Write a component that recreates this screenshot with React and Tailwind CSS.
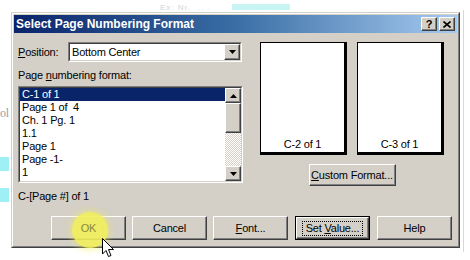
import React from 'react';

const raised =
  'border border-t-white border-l-white border-r-[#404040] border-b-[#404040] shadow-[inset_-1px_-1px_0_#808080]';

const Btn = ({ children, className = '', focus = false }) => (
  <div className={`h-[24px] w-[75px] ${focus ? 'border border-black' : ''} ${className}`}>
    <div className={`h-full w-full ${raised} flex items-center justify-center bg-[#d4d0c8]`}>
      {focus ? (
        <span className="border border-dotted border-black px-[3px] leading-[13px]">{children}</span>
      ) : (
        children
      )}
    </div>
  </div>
);

const Arrow = ({ up }) => (
  <svg width="7" height="4" viewBox="0 0 7 4">
    <path d={up ? 'M3.5 0 L7 4 L0 4 Z' : 'M0 0 L7 0 L3.5 4 Z'} fill="#000" />
  </svg>
);

const Page = ({ label }) => (
  <div className="w-[87px] h-[113px] pr-[2px] pb-[2px] bg-black">
    <div className="h-full w-full bg-white border border-black flex items-end justify-center pb-[1px]">
      <span className="leading-[13px]">{label}</span>
    </div>
  </div>
);

const items = ['C-1 of 1', 'Page 1 of  4', 'Ch. 1 Pg. 1', '1.1', 'Page 1', 'Page -1-', '1'];

export default function App() {
  return (
    <div
      className="relative w-[470px] h-[260px] bg-white overflow-hidden text-[11px] text-black tracking-[-0.2px]"
      style={{ fontFamily: '"Liberation Sans", Arial, sans-serif' }}
    >
      {/* background page content behind the dialog */}
      <div className="absolute left-[160px] top-[2px] text-[8px] text-[#d0d4dc] tracking-[1px]">Ex:&nbsp;Nr. &nbsp;..&nbsp;.</div>
      <div className="absolute left-[232px] top-[4px] w-[58px] h-[6px] bg-[#c8f4f4]" />
      <div className="absolute left-0 top-[104px] text-[12px] text-[#9aa0a8]" style={{ fontFamily: '"Liberation Serif", serif' }}>ol</div>
      <div className="absolute left-0 top-[157px] w-[9px] h-[14px] bg-[#9ef0f4]" />
      <div className="absolute left-0 top-[188px] w-[9px] h-[14px] bg-[#9ef0f4]" />
      <div className="absolute left-[463px] top-[10px] w-px h-[242px] bg-[#d8d8d8]" />

      {/* dialog */}
      <div className="ml-[11px] mt-[12px] w-[449px] h-[236px] border border-t-[#d4d0c8] border-l-[#d4d0c8] border-r-[#404040] border-b-[#404040]">
        <div className="h-full w-full border border-t-white border-l-white border-r-[#808080] border-b-[#808080] bg-[#d4d0c8] p-px flex flex-col">
          <div className="h-[18px] flex items-center justify-between pl-[2px] pr-[2px] bg-[linear-gradient(to_right,#0a246a,#3a6ea5_50%,#a6caf0)]">
            <span className="text-white font-bold text-[12px] tracking-normal">Select Page Numbering Format</span>
            <div className="flex">
              <div className={`w-[16px] h-[14px] ${raised} bg-[#d4d0c8] flex items-center justify-center font-bold text-[11px] leading-none`}>?</div>
              <div className={`ml-[2px] w-[16px] h-[14px] ${raised} bg-[#d4d0c8] flex items-center justify-center`}>
                <svg width="8" height="7" viewBox="0 0 8 7">
                  <path d="M0.5 0.5 L7.5 6.5 M7.5 0.5 L0.5 6.5" stroke="#000" strokeWidth="1.6" />
                </svg>
              </div>
            </div>
          </div>

          <div className="flex pl-[4px] pt-[9px]">
            {/* left column */}
            <div className="w-[225px] flex flex-col">
              <div className="flex items-center h-[20px]">
                <span className="w-[50px]">
                  <span className="underline">P</span>osition:
                </span>
                <div className="w-[174px] h-[20px] border border-t-[#808080] border-l-[#808080] border-r-white border-b-white">
                  <div className="h-full w-full border border-t-[#404040] border-l-[#404040] border-r-[#d4d0c8] border-b-[#d4d0c8] bg-white flex items-center">
                    <span className="flex-1 pl-[2px]">Bottom Center</span>
                    <div className={`w-[16px] h-full ${raised} bg-[#d4d0c8] flex items-center justify-center`}>
                      <Arrow />
                    </div>
                  </div>
                </div>
              </div>
              <div className="mt-[6px] leading-[14px]">
                Page <span className="underline">n</span>umbering format:
              </div>
              <div className="mt-[4px] w-[225px] h-[97px] border border-t-[#808080] border-l-[#808080] border-r-white border-b-white">
                <div className="h-full w-full border border-t-[#404040] border-l-[#404040] border-r-[#d4d0c8] border-b-[#d4d0c8] bg-white flex">
                  <div className="flex-1 overflow-hidden">
                    {items.map((t, i) => (
                      <div
                        key={t}
                        className={`h-[13px] leading-[13px] pl-[2px] whitespace-pre ${i === 0 ? 'bg-[#0a246a] text-white' : ''}`}
                      >
                        {t}
                      </div>
                    ))}
                  </div>
                  <div className="w-[16px] flex flex-col bg-[repeating-conic-gradient(#ffffff_0_25%,#d4d0c8_0_50%)] bg-[length:2px_2px]">
                    <div className={`h-[15px] ${raised} bg-[#d4d0c8] flex items-center justify-center`}>
                      <Arrow up />
                    </div>
                    <div className={`h-[30px] ${raised} bg-[#d4d0c8]`} />
                    <div className="flex-1" />
                    <div className={`h-[15px] ${raised} bg-[#d4d0c8] flex items-center justify-center`}>
                      <Arrow />
                    </div>
                  </div>
                </div>
              </div>
              <div className="mt-[6px] leading-[14px]">C-[Page #] of 1</div>
            </div>

            {/* right column: previews */}
            <div className="ml-[17px] w-[184px] flex flex-col items-center">
              <div className="flex gap-[10px]">
                <Page label="C-2 of 1" />
                <Page label="C-3 of 1" />
              </div>
              <div className={`mt-[9px] w-[87px] h-[22px] ${raised} flex items-center justify-center`}>
                <span>
                  <span className="underline">C</span>ustom Format...
                </span>
              </div>
            </div>
          </div>

          <div className="mt-auto mb-[5px] flex gap-[6px] pl-[37px]">
            <Btn>
              <span className="relative z-10 text-[#8a8a3c]">OK</span>
            </Btn>
            <Btn>Cancel</Btn>
            <Btn>
              <span>
                <span className="underline">F</span>ont...
              </span>
            </Btn>
            <Btn focus className="w-[75px] ml-px">
              <span>
                Set <span className="underline">V</span>alue...
              </span>
            </Btn>
            <Btn className="ml-px">Help</Btn>
          </div>
        </div>
      </div>

      {/* click highlight and cursor */}
      <div className="absolute left-[72px] top-[212px] w-[36px] h-[36px] rounded-full bg-[#f2ee5a]/90 shadow-[0_0_6px_2px_rgba(242,238,90,0.5)] pointer-events-none" />
      <svg className="absolute left-[102px] top-[238px] z-20" width="14" height="22" viewBox="0 0 14 22">
        <path d="M0.5 0.5 L0.5 16 L4 12.5 L6.5 18.5 L9 17.5 L6.5 11.5 L11.5 11.5 Z" fill="#fff" stroke="#000" strokeWidth="1" />
      </svg>
    </div>
  );
}
